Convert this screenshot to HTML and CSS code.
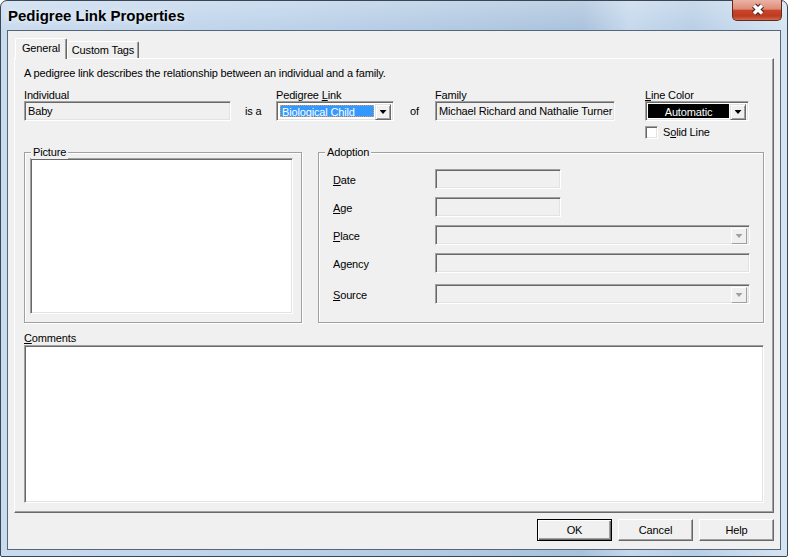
FILE: index.html
```html
<!DOCTYPE html>
<html lang="en">
<head>
    <meta charset="UTF-8">
    <title>Pedigree Link Properties</title>
    <link rel="stylesheet" href="styles.css">
</head>
<body>
<div class="window">
    <div class="titlebar">
        <span class="title">Pedigree Link Properties</span>
    </div>
    <div class="close-btn" title="Close">
        <svg width="50" height="21" viewBox="0 0 50 21">
            <path d="M22 5.5 L30 13.5 M30 5.5 L22 13.5" stroke="#4a1f17" stroke-width="5.5" fill="none"/>
            <path d="M22 5.5 L30 13.5 M30 5.5 L22 13.5" stroke="#ffffff" stroke-width="3.5" fill="none"/>
        </svg>
    </div>

    <div class="client">
        <div class="tabs">
            <div class="tab tab-general active">General</div>
            <div class="tab tab-custom">Custom Tags</div>
        </div>

        <div class="panel">
            <p class="intro">A pedigree link describes the relationship between an individual and a family.</p>

            <div class="link-row">
                <div class="field field-individual">
                    <label>Individual</label>
                    <div class="edit sunken">Baby</div>
                </div>
                <span class="joiner joiner-isa">is a</span>
                <div class="field field-pedigree">
                    <label>Pedigree <u>L</u>ink</label>
                    <div class="combo sunken">
                        <span class="combo-text selected">Biological Child</span>
                        <span class="drop-btn"><i class="arrow"></i></span>
                    </div>
                </div>
                <span class="joiner joiner-of">of</span>
                <div class="field field-family">
                    <label>Family</label>
                    <div class="edit sunken">Michael Richard and Nathalie Turner</div>
                </div>
                <div class="field field-color">
                    <label><u>L</u>ine Color</label>
                    <div class="combo sunken">
                        <span class="combo-text color-swatch">Automatic</span>
                        <span class="drop-btn"><i class="arrow"></i></span>
                    </div>
                    <div class="check-row">
                        <span class="checkbox"></span>
                        <span>S<u>o</u>lid Line</span>
                    </div>
                </div>
            </div>

            <div class="groups">
                <div class="group group-picture">
                    <span class="group-title">Picture</span>
                    <div class="picture-box sunken"></div>
                </div>
                <div class="group group-adoption">
                    <span class="group-title">Adoption</span>
                    <div class="arow">
                        <span class="alabel"><u>D</u>ate</span>
                        <div class="edit sunken short"></div>
                    </div>
                    <div class="arow">
                        <span class="alabel"><u>A</u>ge</span>
                        <div class="edit sunken short"></div>
                    </div>
                    <div class="arow">
                        <span class="alabel"><u>P</u>lace</span>
                        <div class="combo sunken long">
                            <span class="combo-text"></span>
                            <span class="drop-btn disabled"><i class="arrow"></i></span>
                        </div>
                    </div>
                    <div class="arow">
                        <span class="alabel">Agency</span>
                        <div class="edit sunken long"></div>
                    </div>
                    <div class="arow arow-source">
                        <span class="alabel"><u>S</u>ource</span>
                        <div class="combo sunken long">
                            <span class="combo-text"></span>
                            <span class="drop-btn disabled"><i class="arrow"></i></span>
                        </div>
                    </div>
                </div>
            </div>

            <div class="comments">
                <label><u>C</u>omments</label>
                <div class="comments-box sunken"></div>
            </div>
        </div>

        <div class="buttons">
            <button class="btn default">OK</button>
            <button class="btn">Cancel</button>
            <button class="btn">Help</button>
        </div>
    </div>
</div>
</body>
</html>
```

FILE: styles.css
```css
:root {
    --face: #f0f0f0;
    --light: #e3e3e3;
    --shadow: #a0a0a0;
    --dark: #696969;
    --highlight: #3399ff;
}

* {
    margin: 0;
    padding: 0;
    box-sizing: border-box;
}

body {
    font-family: "Liberation Sans", Arial, sans-serif;
    font-size: 11px;
    letter-spacing: -0.15px;
    color: #000;
    background: #fff;
}

/* ===== window frame ===== */
.window {
    position: relative;
    width: 788px;
    height: 557px;
    padding: 0 6px 6px 6px;
    border: 1px solid #3b4654;
    border-radius: 7px 7px 2px 2px;
    background:
        linear-gradient(to bottom, rgba(255, 255, 255, 0.25), rgba(255, 255, 255, 0) 30px),
        linear-gradient(to right, #c9dbee 0%, #bcd2ea 35%, #b0c8e1 60%, #a9c2dc 74%, #c5d8ec 80%, #b8cee6 88%, #d6e4f2 100%);
}

.titlebar {
    height: 29px;
    padding-left: 1px;
}

.title {
    font-size: 15px;
    font-weight: bold;
    line-height: 29px;
    letter-spacing: 0;
    color: #000;
    text-shadow: 0 0 6px rgba(255, 255, 255, 0.9);
}

.close-btn {
    position: absolute;
    top: -1px;
    right: 5px;
    width: 50px;
    height: 21px;
    border: 1px solid #5e2a21;
    border-top: none;
    border-radius: 0 0 5px 5px;
    background: linear-gradient(to bottom, #eab4a6 0%, #dd8c78 45%, #c8452b 52%, #be3a20 80%, #d4694c 100%);
    overflow: hidden;
}

.close-btn svg {
    display: block;
    margin-left: -1px;
}

.client {
    height: 520px;
    background: var(--face);
    border: 1px solid #56667a;
}

/* ===== tabs ===== */
.tabs {
    display: flex;
    align-items: flex-end;
    height: 21px;
    margin-top: 7px;
    margin-bottom: -1px;
    padding-left: 7px;
}

.tab {
    position: relative;
    text-align: center;
    line-height: 13px;
    background: var(--face);
    border: 1px solid;
    border-bottom: none;
    border-color: #fff var(--dark) transparent #fff;
    border-radius: 2px 2px 0 0;
    box-shadow: inset -1px 0 var(--shadow);
}

.tab-general {
    width: 52px;
    height: 21px;
    padding-top: 3px;
    z-index: 1;
}

.tab-custom {
    width: 72px;
    height: 17px;
    padding-top: 2px;
    margin-bottom: 1px;
    margin-left: 0;
}

/* ===== panel ===== */
.panel {
    height: 455px;
    margin: 0 6px;
    padding: 8px 0 0 9px;
    border: 1px solid;
    border-color: #fff var(--dark) var(--dark) #fff;
    box-shadow: inset -1px -1px var(--shadow);
}

.intro {
    line-height: 13px;
}

.sunken {
    border: 1px solid;
    border-color: var(--shadow) #fff #fff var(--shadow);
    box-shadow: inset 1px 1px var(--dark), inset -1px -1px var(--light);
}

label {
    display: block;
    height: 12px;
    line-height: 12px;
}

.link-row {
    display: flex;
    align-items: flex-start;
    margin-top: 9px;
}

.joiner {
    margin-top: 12px;
    line-height: 20px;
}

.joiner-isa {
    width: 45px;
    padding-left: 14px;
}

.joiner-of {
    width: 41px;
    padding-left: 16px;
}

.field-individual { width: 207px; }
.field-pedigree { width: 118px; }
.field-family { width: 180px; }
.field-color { width: 104px; margin-left: 30px; }

.edit {
    height: 20px;
    line-height: 16px;
    padding: 1px 0 0 3px;
    background: var(--face);
    white-space: nowrap;
    overflow: hidden;
}

.combo {
    display: flex;
    height: 20px;
    padding: 2px;
    background: #fff;
}

.combo-text {
    flex: 1;
    line-height: 14px;
    padding-left: 2px;
    white-space: nowrap;
}

.combo-text.selected {
    margin: 1px;
    background: var(--highlight);
    color: #fff;
    outline: 1px dotted #e89a50;
    outline-offset: -1px;
}

.combo-text.color-swatch {
    background: #000;
    color: #fff;
    text-align: center;
    line-height: 16px;
    padding-left: 0;
    margin-right: 1px;
}

.drop-btn {
    display: flex;
    align-items: center;
    justify-content: center;
    width: 16px;
    height: 16px;
    background: var(--face);
    border: 1px solid;
    border-color: var(--light) var(--dark) var(--dark) var(--light);
    box-shadow: inset 1px 1px #fff, inset -1px -1px var(--shadow);
}

.arrow {
    display: block;
    width: 7px;
    height: 4px;
    background: #000;
    clip-path: polygon(0 0, 100% 0, 50% 100%);
}

.drop-btn.disabled {
    border-color: #fff var(--shadow) var(--shadow) #fff;
    box-shadow: none;
}

.drop-btn.disabled .arrow {
    background: var(--shadow);
}

.check-row {
    display: flex;
    align-items: center;
    gap: 5px;
    margin-top: 5px;
    height: 13px;
    line-height: 13px;
}

.checkbox {
    width: 13px;
    height: 13px;
    background: #fff;
    border: 1px solid;
    border-color: var(--shadow) #fff #fff var(--shadow);
    box-shadow: inset 1px 1px var(--dark), inset -1px -1px var(--light);
}

/* ===== group boxes ===== */
.groups {
    display: flex;
    gap: 16px;
    margin-top: 13px;
}

.group {
    position: relative;
    height: 171px;
    border: 1px solid var(--shadow);
    box-shadow: inset 1px 1px #fff, 1px 1px #fff;
}

.group-title {
    position: absolute;
    top: -7px;
    left: 6px;
    padding: 0 2px;
    line-height: 13px;
    background: var(--face);
}

.group-picture {
    width: 278px;
    padding: 5px 8px 8px 5px;
}

.picture-box {
    height: 100%;
    background: #fff;
}

.group-adoption {
    width: 446px;
    padding: 16px 0 0 14px;
}

.arow {
    display: flex;
    height: 20px;
}

.arow + .arow {
    margin-top: 8px;
}

.arow.arow-source {
    margin-top: 11px;
}

.alabel {
    width: 102px;
    line-height: 20px;
    padding-top: 1px;
}

.arow .combo {
    background: var(--face);
}

.short { width: 126px; }
.long { width: 315px; }

/* ===== comments ===== */
.comments {
    margin-top: 9px;
}

.comments label {
    height: 13px;
    line-height: 13px;
}

.comments-box {
    width: 740px;
    height: 158px;
    background: #fff;
}

/* ===== bottom buttons ===== */
.buttons {
    display: flex;
    justify-content: flex-end;
    gap: 6px;
    margin-top: 6px;
    padding-right: 6px;
}

.btn {
    width: 75px;
    height: 22px;
    font-family: inherit;
    font-size: 11px;
    letter-spacing: -0.15px;
    color: #000;
    background: var(--face);
    border: 1px solid;
    border-color: #fff var(--dark) var(--dark) #fff;
    box-shadow: inset -1px -1px var(--shadow);
}

.btn.default {
    border-color: #000;
    box-shadow: inset 1px 1px #fff, inset -1px -1px var(--dark), inset -2px -2px var(--shadow);
}
```
